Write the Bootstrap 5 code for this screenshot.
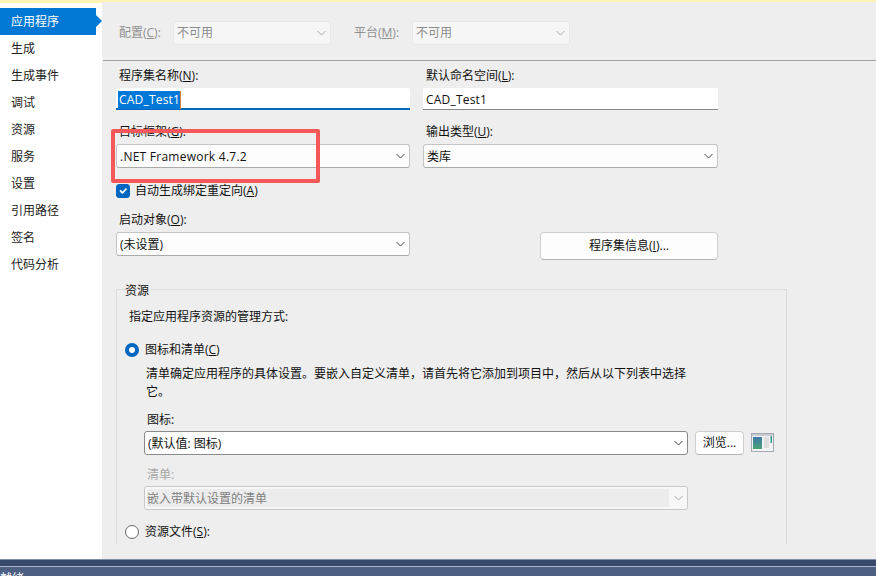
<!DOCTYPE html>
<html lang="zh"><head><meta charset="utf-8"><title>CAD_Test1</title>
<link rel="stylesheet" href="https://cdn.jsdelivr.net/npm/bootstrap@5.3.0/dist/css/bootstrap.min.css">
<style>
html,body{height:576px;overflow:hidden}
body{font-family:"Open Sans","Noto Sans CJK SC",sans-serif;font-size:12px;line-height:16px;color:#111;background:#eee}
.shell{height:559px}
.sidebar{width:102px;background:#fff;border-top:3px solid #fdf3b4;padding-top:5px}
.side-item{height:27px;line-height:27px;width:96px;padding-left:11px;color:#222;position:relative}
.side-item.on{background:#0078d4;color:#fff}
.side-item.on::after{content:"";position:absolute;left:96px;top:7px;border-left:6px solid #0078d4;border-top:6px solid transparent;border-bottom:6px solid transparent}
.content{position:relative;border-top:2px solid #fdf3b4;min-width:0}
.topbar{padding:19px 0 0 14px;height:59px;border-bottom:1px solid #a0a0a0;margin-left:1px}
.topbar .tlabel{color:#909090;width:56px;padding-left:2px}
.topbar .tlabel2{width:58px;margin-left:23px;padding-left:0}
.fields{padding:7px 0 0 14px}
.colL{width:294px}
.colR{width:295px;margin-left:13px}
.flabel{display:block;margin:0;padding-left:3px;height:16px}
.vsel.form-select{font-size:12px;line-height:16px;height:24px;border-radius:3px;border:1px solid #c4c4c4;border-bottom-color:#aaa;padding:4px 20px 2px 3px;color:#111;background-color:#fdfdfd;background-size:9px 6px;background-position:right 4px center;background-image:url("data:image/svg+xml,%3csvg xmlns='http://www.w3.org/2000/svg' viewBox='0 0 9 6'%3e%3cpath fill='none' stroke='%23444' d='M.5 1l4 4 4-4'/%3e%3c/svg%3e");box-shadow:none}
.vsel.form-select:disabled{background-color:#f6f6f6;color:#8c8c8c;border-color:#e8e8e8;padding:3px 20px 3px 3px;background-image:url("data:image/svg+xml,%3csvg xmlns='http://www.w3.org/2000/svg' viewBox='0 0 9 6'%3e%3cpath fill='none' stroke='%23aaa' d='M.5 1l4 4 4-4'/%3e%3c/svg%3e")}
.w158{width:158px}
.latin{letter-spacing:.25px}
.txt.form-control{font-size:12px;line-height:16px;height:22px;border-radius:2px 2px 0 0;border:0;border-bottom:1px solid #868686;padding:4px 2px 0 3px;background:#fff;color:#111;letter-spacing:.2px}
.txt.active-in{border-bottom:2px solid #0067c0;padding:3px 2px 0}
.picked{background:#0078d7;color:#fff;padding:1px 0 1px 1px;border-right:1px solid #e08030;display:inline-block;margin-top:0}
.chk.form-check-input{width:14px;height:14px;margin:0;border-radius:3px;background-color:#0067c0;border-color:#0067c0;flex:none}
.rad.form-check-input{width:14px;height:14px;margin:0;flex:none;background-color:#fff;border:1px solid #666}
.rad.form-check-input:checked{background-color:#fff;border:4px solid #0067c0;background-image:none}
.gap5{gap:5px}
.gap6{gap:6px}
.vbtn.btn{font-size:12px;line-height:16px;border-radius:4px;background:#fdfdfd;border:1px solid #cfcfcf;border-bottom-color:#b5b5b5;color:#111;padding:0}
.asm{width:178px;height:28px;margin-left:130px;margin-top:0}
.group{margin:29px 0 0 14px;width:671px;height:255px;border-left:1px solid #dcdcdc;border-right:1px solid #dcdcdc;border-top:1px solid #dcdcdc;position:relative}
.gtitle{position:absolute;top:-7px;left:8px;padding:0;background:#eee;width:26px;height:16px}
.ginner{padding:19px 0 0 8px}
.desc{width:545px;margin:7px 0 0 21px;line-height:18px}
.rowgap{margin-top:17px}
.sub{padding-left:19px}
.subl{padding-left:3px;height:16px;margin-top:11px}
.selrow{margin-top:3px}
.vsel.strong.form-select{border-color:#8a8a8a;background-color:#fff}
.w544{width:544px}
.browse{width:49px;height:24px;margin-left:7px}
.appicon{margin-left:7px;margin-top:2px;display:block}
.overlay{position:absolute;left:9px;top:127px;width:209px;height:54px;border:4px solid #f45858;border-radius:2px;pointer-events:none}
.taskA{height:7px;background:#36496b;border-top:1px solid #7f8ea8}
.taskB{height:10px;background:#4d6082;border-top:1px solid #a9b4c8;color:#fff;line-height:24px;overflow:hidden}
.row-two{margin-top:14px}
.row-two .vsel{margin-top:4px}
.chk-row{margin-top:15px;margin-left:0}
.start-l{margin-top:13px;margin-bottom:4px}
.dim{color:#a8a8a8;margin-top:12px}
.vsel.off.form-select:disabled{margin-top:3px;padding:4px 20px 2px 2px;background-color:#f7f7f7;border-color:#c8c8c8;color:#808080;background-image:url("data:image/svg+xml,%3csvg xmlns='http://www.w3.org/2000/svg' viewBox='0 0 9 6'%3e%3cpath fill='none' stroke='%23aaa' d='M.5 1l4 4 4-4'/%3e%3c/svg%3e"),linear-gradient(#ececec,#ececec);background-size:9px 6px,522px 18px;background-position:right 4px center,2px center;background-repeat:no-repeat}
.last-r{margin-top:14px}
u{text-underline-offset:1px}
</style></head>
<body>
<div class="shell d-flex">
  <nav class="sidebar flex-shrink-0">
    <div class="side-item on">应用程序</div>
    <div class="side-item">生成</div>
    <div class="side-item">生成事件</div>
    <div class="side-item">调试</div>
    <div class="side-item">资源</div>
    <div class="side-item">服务</div>
    <div class="side-item">设置</div>
    <div class="side-item">引用路径</div>
    <div class="side-item">签名</div>
    <div class="side-item">代码分析</div>
  </nav>
  <main class="content flex-grow-1">
    <div class="topbar d-flex align-items-start">
      <div class="d-flex align-items-center">
        <span class="tlabel flex-shrink-0">配置(<u>C</u>):</span>
        <select class="vsel form-select w158" disabled><option>不可用</option></select>
        <span class="tlabel tlabel2 flex-shrink-0">平台(<u>M</u>):</span>
        <select class="vsel form-select w158" disabled><option>不可用</option></select>
      </div>
    </div>
    <div class="fields">
      <div class="d-flex">
        <div class="colL">
          <label class="flabel">程序集名称(<u>N</u>):</label>
          <div class="txt active-in form-control mt-1"><span class="picked">CAD_Test1</span></div>
        </div>
        <div class="colR">
          <label class="flabel">默认命名空间(<u>L</u>):</label>
          <div class="txt form-control mt-1">CAD_Test1</div>
        </div>
      </div>
      <div class="d-flex row-two">
        <div class="colL">
          <label class="flabel">目标框架(<u>G</u>):</label>
          <select class="vsel form-select latin"><option>.NET Framework 4.7.2</option></select>
        </div>
        <div class="colR">
          <label class="flabel">输出类型(<u>U</u>):</label>
          <select class="vsel form-select"><option>类库</option></select>
        </div>
      </div>
      <div class="d-flex align-items-center gap5 chk-row">
        <input class="chk form-check-input" type="checkbox" checked>
        <span>自动生成绑定重定向(<u>A</u>)</span>
      </div>
      <label class="flabel start-l">启动对象(<u>O</u>):</label>
      <div class="d-flex align-items-start">
        <div class="colL"><select class="vsel form-select"><option>(未设置)</option></select></div>
        <button class="vbtn btn asm" type="button">程序集信息(<u>I</u>)...</button>
      </div>
    </div>
    <section class="group">
      <div class="gtitle">资源</div>
      <div class="ginner">
        <div class="ps-1">指定应用程序资源的管理方式:</div>
        <div class="d-flex align-items-center gap6 rowgap">
          <input class="rad form-check-input" type="radio" name="r" checked>
          <span>图标和清单(<u>C</u>)</span>
        </div>
        <div class="desc">清单确定应用程序的具体设置。要嵌入自定义清单，请首先将它添加到项目中，然后从以下列表中选择它。</div>
        <div class="sub">
          <div class="subl">图标:</div>
          <div class="d-flex align-items-start selrow">
            <select class="vsel strong form-select w544"><option>(默认值: 图标)</option></select>
            <button class="vbtn btn browse" type="button">浏览...</button>
            <svg class="appicon" width="23" height="19" viewBox="0 0 23 19"><defs><linearGradient id="ig" x1="0" y1="0" x2="0" y2="1"><stop offset="0" stop-color="#3f78a8"/><stop offset="1" stop-color="#4aa272"/></linearGradient></defs><rect x=".5" y=".5" width="22" height="18" fill="#f2f3f5" stroke="#a4a9b0"/><rect x="1" y="1" width="21" height="2" fill="#c9ccd2"/><rect x="2" y="4" width="9" height="12" fill="url(#ig)"/><rect x="13" y="4" width="5" height="11" fill="#dddddd"/><rect x="19.5" y="3" width="1.5" height="7" fill="#2e9e8b"/></svg>
          </div>
          <div class="subl dim">清单:</div>
          <select class="vsel form-select w544 off" disabled><option>嵌入带默认设置的清单</option></select>
        </div>
        <div class="d-flex align-items-center gap6 last-r">
          <input class="rad form-check-input" type="radio" name="r">
          <span>资源文件(<u>S</u>):</span>
        </div>
      </div>
    </section>
    <div class="overlay"></div>
  </main>
</div>
<div class="taskA"></div>
<div class="taskB">就绪</div>
<script src="https://cdn.jsdelivr.net/npm/bootstrap@5.3.0/dist/js/bootstrap.bundle.min.js"></script>
</body></html>
